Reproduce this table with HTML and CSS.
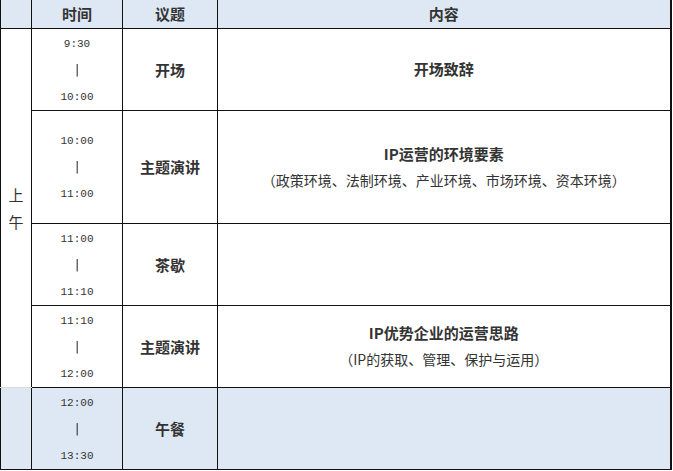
FILE: index.html
```html
<!DOCTYPE html>
<html lang="zh-CN">
<head>
<meta charset="utf-8">
<title>议程</title>
<link rel="stylesheet" href="styles.css">
</head>
<body>
<table class="agenda">
  <colgroup>
    <col class="c-period">
    <col class="c-time">
    <col class="c-topic">
    <col class="c-content">
  </colgroup>
  <thead>
    <tr class="head">
      <th></th>
      <th>时间</th>
      <th>议题</th>
      <th>内容</th>
    </tr>
  </thead>
  <tbody>
    <tr class="row">
      <td class="period" rowspan="4"><span>上</span><span>午</span></td>
      <td class="time">9:30<br><span class="sep">|</span><br>10:00</td>
      <td class="topic">开场</td>
      <td class="content"><b>开场致辞</b></td>
    </tr>
    <tr class="row tall">
      <td class="time">10:00<br><span class="sep">|</span><br>11:00</td>
      <td class="topic">主题演讲</td>
      <td class="content"><b>IP运营的环境要素</b><br><span class="sub">（政策环境、法制环境、产业环境、市场环境、资本环境）</span></td>
    </tr>
    <tr class="row">
      <td class="time">11:00<br><span class="sep">|</span><br>11:10</td>
      <td class="topic">茶歇</td>
      <td class="content"></td>
    </tr>
    <tr class="row">
      <td class="time">11:10<br><span class="sep">|</span><br>12:00</td>
      <td class="topic">主题演讲</td>
      <td class="content"><b>IP优势企业的运营思路</b><br><span class="sub">（IP的获取、管理、保护与运用）</span></td>
    </tr>
    <tr class="row lunch">
      <td class="period-blank"></td>
      <td class="time">12:00<br><span class="sep">|</span><br>13:30</td>
      <td class="topic">午餐</td>
      <td class="content"></td>
    </tr>
  </tbody>
</table>
</body>
</html>
```

FILE: styles.css
```css
html, body {
  margin: 0;
  padding: 0;
  background: #ffffff;
}

body {
  font-family: "Noto Sans CJK SC", "Liberation Sans", sans-serif;
  color: #333333;
}

.agenda {
  border-collapse: collapse;
  table-layout: fixed;
  width: 670px;
  border-left: 1px solid #111;
  border-right: 2px solid #111;
}

.c-period { width: 31px; }
.c-time { width: 91px; }
.c-topic { width: 95px; }
.c-content { width: 453px; }

.agenda th,
.agenda td {
  border: 1px solid #111;
  padding: 0;
  text-align: center;
  vertical-align: middle;
}

.agenda thead th {
  border-top: none;
}

.head {
  height: 28px;
  background: #dde8f4;
}

.head th {
  font-size: 15px;
  font-weight: bold;
  line-height: 18px;
  color: #333;
}

.row { height: 82px; }
.row.tall { height: 113px; }
.row.lunch { height: 81px; background: #dde8f4; }

.period {
  font-size: 15px;
  line-height: 27px;
  border-bottom: 1px solid #d9d9d9 !important;
}

.period span {
  display: block;
}

.period-blank {
  border-top: 1px solid #d9d9d9 !important;
}

.agenda td.time {
  font-family: "Liberation Mono", "DejaVu Sans Mono", monospace;
  font-size: 11px;
  line-height: 26px;
  color: #333;
  padding-top: 2px;
}

.sep {
  display: inline-block;
  font-family: "DejaVu Sans", sans-serif;
  font-size: 13px;
  line-height: 26px;
  color: #333;
  will-change: transform;
}

.topic {
  font-size: 15px;
  font-weight: bold;
  color: #333;
}

.content {
  font-size: 15px;
  line-height: 26px;
}

.content b {
  font-weight: bold;
}

.sub {
  font-size: 14px;
  font-weight: normal;
}
```
